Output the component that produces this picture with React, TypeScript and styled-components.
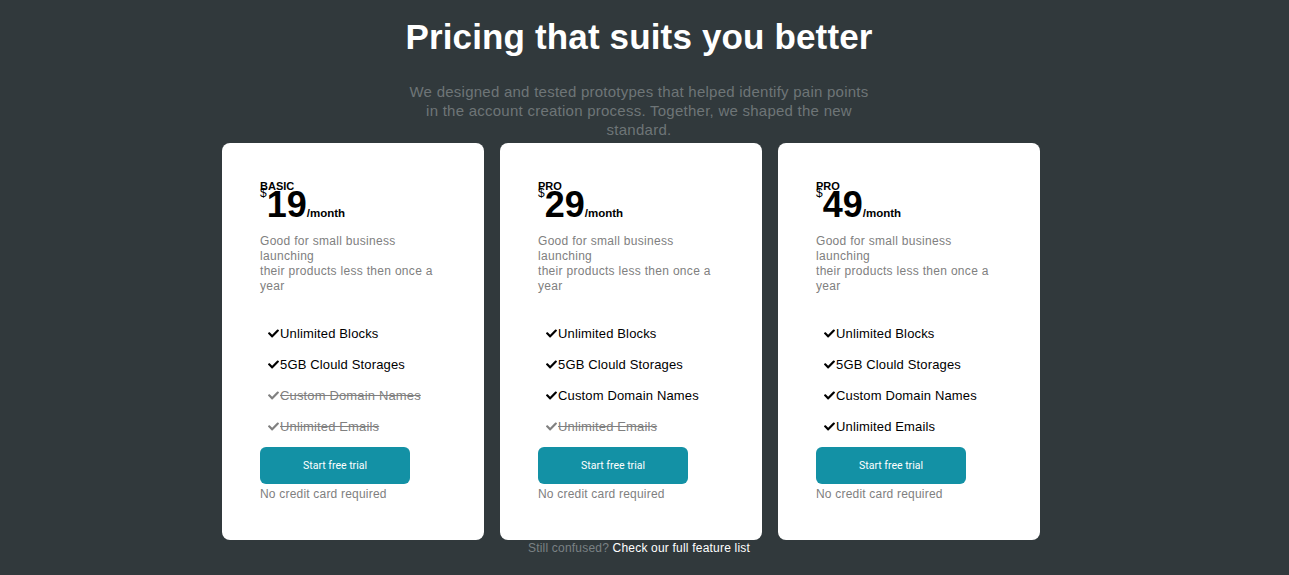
import React from "react";
import styled, { createGlobalStyle } from "styled-components";
import { FaCheck } from "react-icons/fa";

const Global = createGlobalStyle`
  html, body { margin: 0; padding: 0; background: #31393c; }
  body { font-family: "Liberation Sans", Arial, sans-serif; }
  * { box-sizing: border-box; }
`;

const Page = styled.main`
  width: calc(100% - 11px);
  display: flex;
  flex-direction: column;
  align-items: center;
  padding-top: 17px;
`;

const Title = styled.h1`
  margin: 0;
  font-size: 35px;
  line-height: 40px;
  font-weight: 700;
  letter-spacing: 0.15px;
  color: #ffffff;
  text-align: center;
`;

const Subtitle = styled.p`
  margin: 25px 0 0;
  width: 470px;
  font-size: 15px;
  line-height: 19px;
  letter-spacing: 0.25px;
  color: #6e7577;
  text-align: center;
`;

const Cards = styled.div`
  display: flex;
  margin-top: 4px;
`;

const Card = styled.section`
  width: 262px;
  margin-right: 16px;
  background: #ffffff;
  border-radius: 8px;
  padding: 38px;
  display: flex;
  flex-direction: column;
  align-items: flex-start;
`;

const Tier = styled.div`
  font-size: 11px;
  line-height: 11px;
  font-weight: 700;
  color: #000;
`;

const Price = styled.div`
  margin-top: -5px;
  line-height: 36px;
  height: 34px;
  color: #000;
  white-space: nowrap;
`;

const Currency = styled.span`
  font-size: 12px;
  line-height: 12px;
  vertical-align: top;
`;

const Amount = styled.span`
  font-size: 36px;
  font-weight: 700;
`;

const Period = styled.span`
  font-size: 11.5px;
  font-weight: 700;
`;

const Description = styled.p`
  margin: 13px 0 0;
  width: 182px;
  font-size: 12px;
  line-height: 15px;
  letter-spacing: 0.3px;
  color: #808080;
`;

const Features = styled.ul`
  list-style: none;
  margin: 24px 0 0;
  padding: 0 0 0 8px;
`;

const Feature = styled.li<{ $off?: boolean }>`
  height: 31px;
  display: flex;
  align-items: center;
  gap: 1px;
  font-size: 13px;
  letter-spacing: 0.15px;
  color: ${(p) => (p.$off ? "#808080" : "#000000")};
  white-space: nowrap;
  svg {
    flex: none;
    width: 11px;
    height: 11px;
  }
`;

const FeatureText = styled.span<{ $off?: boolean }>`
  text-decoration: ${(p) => (p.$off ? "line-through" : "none")};
`;

const TrialButton = styled.button`
  margin-top: 5px;
  width: 150px;
  height: 37px;
  border: none;
  border-radius: 6px;
  background: #1391a5;
  color: #ffffff;
  font-family: Roboto, "Liberation Sans", sans-serif;
  font-size: 10.5px;
  cursor: pointer;
`;

const Note = styled.p`
  margin: 3px 0 0;
  font-size: 12px;
  line-height: 15px;
  letter-spacing: 0.2px;
  color: #808080;
`;

const Footer = styled.p`
  margin: 1px 0 0;
  font-size: 12px;
  line-height: 14px;
  letter-spacing: 0.2px;
  color: #7a8184;
`;

const FooterLink = styled.a`
  color: #ffffff;
  text-decoration: none;
`;

type Plan = {
  tier: string;
  price: number;
  features: { label: string; off?: boolean }[];
};

const featureNames = [
  "Unlimited Blocks",
  "5GB Clould Storages",
  "Custom Domain Names",
  "Unlimited Emails",
];

const plans: Plan[] = [
  {
    tier: "BASIC",
    price: 19,
    features: featureNames.map((l, i) => ({ label: l, off: i >= 2 })),
  },
  {
    tier: "PRO",
    price: 29,
    features: featureNames.map((l, i) => ({ label: l, off: i >= 3 })),
  },
  {
    tier: "PRO",
    price: 49,
    features: featureNames.map((l) => ({ label: l })),
  },
];

export default function App() {
  return (
    <>
      <Global />
      <Page>
        <Title>Pricing that suits you better</Title>
        <Subtitle>
          We designed and tested prototypes that helped identify pain points in
          the account creation process. Together, we shaped the new standard.
        </Subtitle>
        <Cards>
          {plans.map((plan, i) => (
            <Card key={i}>
              <Tier>{plan.tier}</Tier>
              <Price>
                <Currency>$</Currency>
                <Amount>{plan.price}</Amount>
                <Period>/month</Period>
              </Price>
              <Description>
                Good for small business launching
                <br />
                their products less then once a year
              </Description>
              <Features>
                {plan.features.map((f) => (
                  <Feature key={f.label} $off={f.off}>
                    <FaCheck />
                    <FeatureText $off={f.off}>{f.label}</FeatureText>
                  </Feature>
                ))}
              </Features>
              <TrialButton>Start free trial</TrialButton>
              <Note>No credit card required</Note>
            </Card>
          ))}
        </Cards>
        <Footer>
          Still confused? <FooterLink href="#">Check our full feature list</FooterLink>
        </Footer>
      </Page>
    </>
  );
}
